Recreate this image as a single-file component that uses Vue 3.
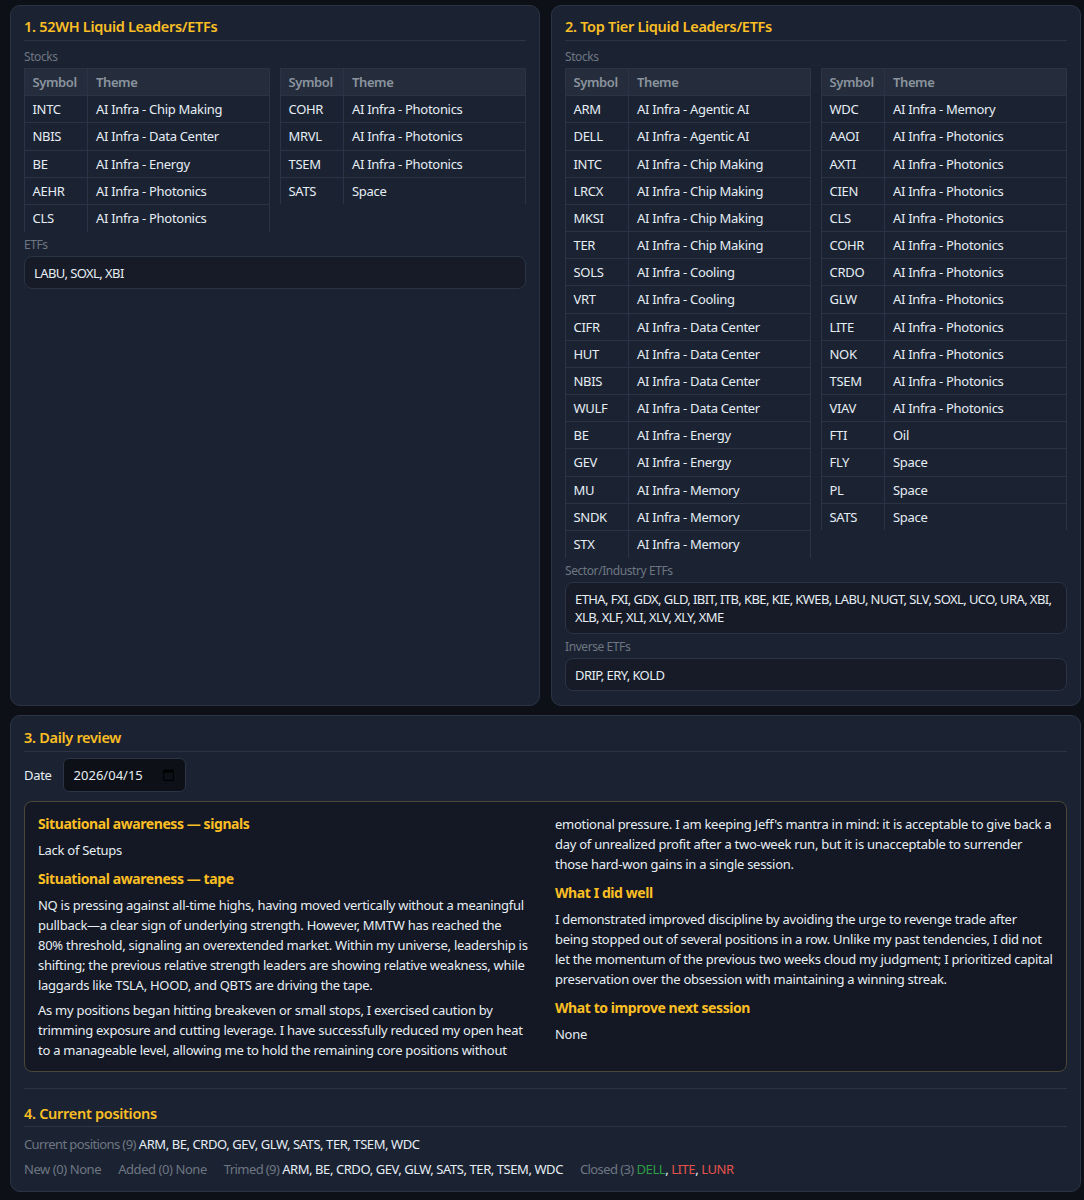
<script setup>
const toRows = (s) => s.split('|').map((r) => r.split(':'))
const a1 = toRows('INTC:AI Infra - Chip Making|NBIS:AI Infra - Data Center|BE:AI Infra - Energy|AEHR:AI Infra - Photonics|CLS:AI Infra - Photonics')
const a2 = toRows('COHR:AI Infra - Photonics|MRVL:AI Infra - Photonics|TSEM:AI Infra - Photonics|SATS:Space')
const b1 = toRows('ARM:AI Infra - Agentic AI|DELL:AI Infra - Agentic AI|INTC:AI Infra - Chip Making|LRCX:AI Infra - Chip Making|MKSI:AI Infra - Chip Making|TER:AI Infra - Chip Making|SOLS:AI Infra - Cooling|VRT:AI Infra - Cooling|CIFR:AI Infra - Data Center|HUT:AI Infra - Data Center|NBIS:AI Infra - Data Center|WULF:AI Infra - Data Center|BE:AI Infra - Energy|GEV:AI Infra - Energy|MU:AI Infra - Memory|SNDK:AI Infra - Memory|STX:AI Infra - Memory')
const b2 = toRows('WDC:AI Infra - Memory|AAOI:AI Infra - Photonics|AXTI:AI Infra - Photonics|CIEN:AI Infra - Photonics|CLS:AI Infra - Photonics|COHR:AI Infra - Photonics|CRDO:AI Infra - Photonics|GLW:AI Infra - Photonics|LITE:AI Infra - Photonics|NOK:AI Infra - Photonics|TSEM:AI Infra - Photonics|VIAV:AI Infra - Photonics|FTI:Oil|FLY:Space|PL:Space|SATS:Space')
const panels = [
  { title: '1. 52WH Liquid Leaders/ETFs', tables: [a1, a2], boxes: [['ETFs', 'LABU, SOXL, XBI']] },
  { title: '2. Top Tier Liquid Leaders/ETFs', tables: [b1, b2], boxes: [
    ['Sector/Industry ETFs', 'ETHA, FXI, GDX, GLD, IBIT, ITB, KBE, KIE, KWEB, LABU, NUGT, SLV, SOXL, UCO, URA, XBI, XLB, XLF, XLI, XLV, XLY, XME'],
    ['Inverse ETFs', 'DRIP, ERY, KOLD'],
  ] },
]
</script>

<template>
  <div class="page">
    <div class="top">
      <section v-for="p in panels" :key="p.title" class="panel">
        <h2 class="title">{{ p.title }}</h2>
        <div class="label first">Stocks</div>
        <div class="tables">
          <table v-for="(t, i) in p.tables" :key="i">
            <thead><tr><th class="sym">Symbol</th><th>Theme</th></tr></thead>
            <tbody>
              <tr v-for="r in t" :key="r[0]"><td class="sym">{{ r[0] }}</td><td>{{ r[1] }}</td></tr>
            </tbody>
          </table>
        </div>
        <template v-for="b in p.boxes" :key="b[0]">
          <div class="label">{{ b[0] }}</div>
          <div class="box">{{ b[1] }}</div>
        </template>
      </section>
    </div>
    <section class="panel lower">
      <h2 class="title">3. Daily review</h2>
      <div class="date-row">
        <span class="date-label">Date</span>
        <div class="date">
          <span>2026/04/15</span>
          <svg width="11" height="12" viewBox="0 0 11 12"><path d="M2.5 0v2M8.5 0v2" stroke="#000" stroke-width="1.3"/><rect x="0.6" y="1.4" width="9.8" height="10" rx="1" fill="none" stroke="#000" stroke-width="1.2"/><rect x="0.6" y="1.4" width="9.8" height="2.2" fill="#000"/></svg>
        </div>
      </div>
      <div class="review">
        <h3 class="h-first">Situational awareness — signals</h3>
        <p>Lack of Setups</p>
        <h3>Situational awareness — tape</h3>
        <p>NQ is pressing against all-time highs, having moved vertically without a meaningful pullback—a clear sign of underlying strength. However, MMTW has reached the 80%&nbsp;threshold, signaling an overextended market. Within my universe, leadership is shifting; the previous relative strength leaders are showing relative weakness, while laggards like TSLA, HOOD, and QBTS are driving the tape.</p>
        <p>As my positions began hitting breakeven or small stops, I exercised caution by trimming exposure and cutting leverage. I have successfully reduced my open heat to a manageable level, allowing me to hold the remaining core positions without emotional pressure. I am keeping Jeff's mantra in mind: it is acceptable to give back a day of unrealized profit after a two-week run, but it is unacceptable to surrender those hard-won gains in a single session.</p>
        <h3>What I did well</h3>
        <p>I demonstrated improved discipline by avoiding the urge to revenge trade after being stopped out of several positions in a row. Unlike my past tendencies, I did not let the momentum of the previous two weeks cloud my judgment; I prioritized capital preservation over the obsession with maintaining a winning streak.</p>
        <h3>What to improve next session</h3>
        <p>None</p>
      </div>
      <hr class="sep" />
      <h2 class="title positions">4. Current positions</h2>
      <div class="line"><span class="muted tight">Current positions (9)</span> ARM, BE, CRDO, GEV, GLW, SATS, TER, TSEM, WDC</div>
      <div class="line items">
        <span><span class="muted">New (0) None</span></span>
        <span><span class="muted">Added (0) None</span></span>
        <span><span class="muted tight">Trimed (9)</span> ARM, BE, CRDO, GEV, GLW, SATS, TER, TSEM, WDC</span>
        <span><span class="muted tight">Closed (3)</span> <span class="green">DELL</span>, <span class="red">LITE</span>, <span class="red">LUNR</span></span>
      </div>
    </section>
  </div>
</template>

<style>
html, body { margin: 0; background: #0d1117; }
</style>

<style scoped>
.page { width: 1071px; margin-left: 10px; padding-top: 5px; font-family: "Noto Sans", "Open Sans", sans-serif; font-size: 13px; letter-spacing: -0.3px; color: #e6edf3; }
.top { display: grid; grid-template-columns: 530px 530px; gap: 11px; margin-bottom: 9px; align-items: stretch; }
.panel { background: #1b2333; border: 1px solid #2a3445; border-radius: 10px; padding: 10px 13px 13.5px; box-sizing: border-box; }
.lower { padding: 11px 13px 13px; }
.title { margin: 0; padding-bottom: 4px; font-size: 14.5px; letter-spacing: -0.3px; line-height: 20px; font-weight: 600; color: #fbbf24; border-bottom: 1px solid #2a3445; }
.title.positions { padding-bottom: 3px; }
.label { font-size: 12px; letter-spacing: -0.42px; line-height: 16px; color: #6e7681; margin: 5.5px 0 3px; }
.label.first { margin: 8px 0 3px; }
.tables { display: grid; grid-template-columns: 1fr 1fr; gap: 10px; align-items: start; }
table { width: 100%; border-collapse: collapse; table-layout: fixed; }
th, td { border: 1px solid #2a3445; padding: 0 7.5px; height: 27.18px; box-sizing: border-box; text-align: left; font-weight: 400; line-height: 16px; }
tbody tr:last-child td { border-bottom: none; }
th { background: #252d3d; color: #8b949e; font-weight: 600; letter-spacing: -0.4px; }
th:not(.sym), td:not(.sym) { padding-left: 8px; }
.sym { width: 63px; }
.box { background: #161b27; border: 1px solid #2a3445; border-radius: 8px; padding: 6.5px 4px 6.5px 9px; line-height: 18.2px; letter-spacing: -0.58px; }
.date-row { display: flex; align-items: center; gap: 11px; margin-top: 6px; }
.date { display: flex; align-items: center; justify-content: space-between; width: 123px; height: 34px; box-sizing: border-box; padding: 0 11px 0 10px; background: #0d1117; border: 1px solid #2a3445; border-radius: 6px; letter-spacing: 0; }
.review { margin-top: 9px; box-sizing: border-box; padding: 12px 13px 11px; background: #131824; border: 1px solid #4b4637; border-radius: 8px; column-count: 2; column-gap: 19px; line-height: 20px; letter-spacing: -0.27px; }
.review h3 { margin: 9px 0 6px; font-size: 14px; letter-spacing: -0.42px; line-height: 20px; color: #fbbf24; font-weight: 700; }
.review .h-first { margin-top: 0; }
.review p { margin: 0 0 5px; }
.sep { border: none; border-top: 1px solid #2a3445; margin: 16px 0 14px; }
.line { margin-top: 7px; line-height: 18px; letter-spacing: -0.43px; }
.title + .line { margin-top: 8px; }
.items { display: flex; gap: 17px; }
.muted { color: #6e7681; }
.tight { letter-spacing: -0.6px; }
.green { color: #2ea043; }
.red { color: #e5534b; }
</style>
